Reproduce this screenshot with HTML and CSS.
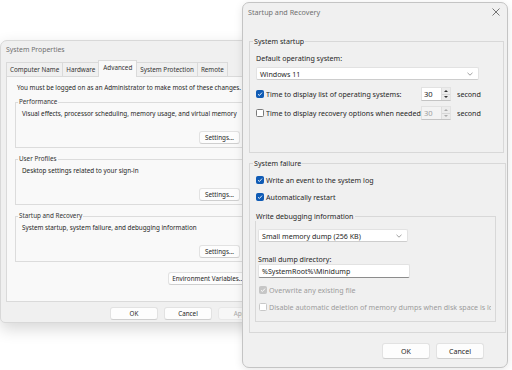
FILE: index.html
```html
<!DOCTYPE html>
<html lang="en">
<head>
  <meta charset="UTF-8">
  <meta name="viewport" content="width=device-width, initial-scale=1.0">
  <title>System Properties</title>
  <link rel="stylesheet" href="styles.css">
</head>
<body>
  <div class="desk">

    <!-- System Properties window (behind) -->
    <div class="win sysprop">
      <div class="title">System Properties</div>
      <div class="tabs">
        <span class="tab">Computer Name</span>
        <span class="tab">Hardware</span>
        <span class="tab active">Advanced</span>
        <span class="tab">System Protection</span>
        <span class="tab">Remote</span>
      </div>
      <div class="panel">
        <p class="note">You must be logged on as an Administrator to make most of these changes.</p>

        <fieldset class="grp">
          <legend>Performance</legend>
          <p>Visual effects, processor scheduling, memory usage, and virtual memory</p>
          <div class="btnrow"><button class="btn">Settings...</button></div>
        </fieldset>

        <fieldset class="grp">
          <legend>User Profiles</legend>
          <p>Desktop settings related to your sign-in</p>
          <div class="btnrow"><button class="btn">Settings...</button></div>
        </fieldset>

        <fieldset class="grp">
          <legend>Startup and Recovery</legend>
          <p>System startup, system failure, and debugging information</p>
          <div class="btnrow"><button class="btn">Settings...</button></div>
        </fieldset>

        <div class="btnrow env-row"><button class="btn env">Environment Variables...</button></div>
      </div>
      <div class="footer">
        <button class="btn">OK</button>
        <button class="btn">Cancel</button>
        <button class="btn" disabled>Apply</button>
      </div>
    </div>

    <!-- Startup and Recovery dialog (front) -->
    <div class="win sr">
      <div class="title">
        <span>Startup and Recovery</span>
        <svg class="close" width="8" height="8" viewBox="0 0 8 8"><path d="M0.5 0.5 L7.5 7.5 M7.5 0.5 L0.5 7.5" stroke="#555" stroke-width="0.8"/></svg>
      </div>
      <div class="body">
        <fieldset class="fs fs-start">
          <legend>System startup</legend>
          <div class="lbl">Default operating system:</div>
          <div class="select os">
            <span>Windows 11</span>
            <svg width="6" height="4" viewBox="0 0 6 4"><path d="M0.5 0.8 L3 3.2 L5.5 0.8" stroke="#777" stroke-width="0.7" fill="none"/></svg>
          </div>
          <div class="row first">
            <span class="cb on"><svg width="8" height="8" viewBox="0 0 8 8"><path d="M2 4.2 L3.4 5.5 L6 2.6" stroke="#fff" stroke-width="0.9" fill="none"/></svg></span>
            <span class="rowtext">Time to display list of operating systems:</span>
            <span class="num"><span class="val">30</span><span class="spin"><i class="up"></i><i class="down"></i></span></span>
            <span class="secs">seconds</span>
          </div>
          <div class="row">
            <span class="cb"></span>
            <span class="rowtext">Time to display recovery options when needed:</span>
            <span class="num off"><span class="val">30</span><span class="spin"><i class="up"></i><i class="down"></i></span></span>
            <span class="secs">seconds</span>
          </div>
        </fieldset>

        <fieldset class="fs fs-fail">
          <legend>System failure</legend>
          <div class="row first">
            <span class="cb on"><svg width="8" height="8" viewBox="0 0 8 8"><path d="M2 4.2 L3.4 5.5 L6 2.6" stroke="#fff" stroke-width="0.9" fill="none"/></svg></span>
            <span>Write an event to the system log</span>
          </div>
          <div class="row">
            <span class="cb on"><svg width="8" height="8" viewBox="0 0 8 8"><path d="M2 4.2 L3.4 5.5 L6 2.6" stroke="#fff" stroke-width="0.9" fill="none"/></svg></span>
            <span>Automatically restart</span>
          </div>

          <fieldset class="fs inner">
            <legend>Write debugging information</legend>
            <div class="select dump">
              <span>Small memory dump (256 KB)</span>
              <svg width="6" height="4" viewBox="0 0 6 4"><path d="M0.5 0.8 L3 3.2 L5.5 0.8" stroke="#777" stroke-width="0.7" fill="none"/></svg>
            </div>
            <div class="lbl dir-lbl">Small dump directory:</div>
            <div class="textbox">%SystemRoot%\Minidump</div>
            <div class="row first dis">
              <span class="cb on"><svg width="8" height="8" viewBox="0 0 8 8"><path d="M2 4.2 L3.4 5.5 L6 2.6" stroke="#fff" stroke-width="0.9" fill="none"/></svg></span>
              <span>Overwrite any existing file</span>
            </div>
            <div class="row dis">
              <span class="cb"></span>
              <span class="clip">Disable automatic deletion of memory dumps when disk space is low</span>
            </div>
          </fieldset>
        </fieldset>

        <div class="footer">
          <button class="btn">OK</button>
          <button class="btn">Cancel</button>
        </div>
      </div>
    </div>

  </div>
</body>
</html>
```

FILE: styles.css
```css
body {
  margin: 0;
  font-family: "Noto Sans", "Segoe UI", sans-serif;
  color: #262626;
}
.desk {
  position: relative;
  width: 512px;
  height: 370px;
  background: #fff;
  overflow: hidden;
}
.win {
  position: absolute;
  box-sizing: border-box;
  background: #f0f0f0;
}
p {
  margin: 0;
}
.btn {
  box-sizing: border-box;
  font-family: inherit;
  font-size: inherit;
  color: #262626;
  background: #fdfdfd;
  border: 1px solid #e2e2e2;
  border-bottom-color: #cfcfcf;
  border-radius: 3px;
  padding: 0;
  cursor: pointer;
}
.btn:disabled {
  color: #a8a8a8;
  background: #f7f7f7;
  border-color: #e8e8e8;
}

/* System Properties */
.sysprop {
  left: 0;
  top: 40px;
  width: 272px;
  height: 283px;
  border: 1px solid #d8d8d8;
  border-radius: 7px 7px 5px 5px;
  box-shadow: 0 6px 16px rgba(0, 0, 0, 0.16);
  font-size: 6.3px;
}
.sysprop .title {
  height: 17px;
  line-height: 17px;
  padding-left: 5px;
  color: #707070;
  font-size: 6.9px;
}
.tabs {
  display: flex;
  align-items: flex-end;
  height: 18px;
  padding-left: 5px;
  position: relative;
  z-index: 1;
}
.tab {
  height: 14px;
  line-height: 13px;
  padding: 0 3px;
  box-sizing: border-box;
  border: 1px solid #dadada;
  border-bottom: none;
  margin-right: -1px;
  background: #f0f0f0;
  color: #333;
}
.tab.active {
  height: 17px;
  line-height: 14px;
  background: #f9f9f9;
  margin-bottom: -1px;
  padding: 0 4px;
  position: relative;
}
.panel {
  box-sizing: border-box;
  height: 226px;
  margin: 0 5px;
  padding: 6px 8px 0;
  border: 1px solid #dadada;
  background: #f9f9f9;
}
.note {
  line-height: 10px;
  padding-left: 2px;
}
.grp {
  margin: 6px 0 0;
  padding: 0 8px 3px 6px;
  border: 1px solid #dcdcdc;
}
.grp:first-of-type {
  margin-top: 4px;
}
.grp legend {
  line-height: 10px;
  padding: 0 1px;
  margin-left: -4px;
  color: #333;
}
.grp p {
  margin-top: 2px;
  line-height: 10px;
}
.btnrow {
  display: flex;
  justify-content: flex-end;
  margin-top: 12px;
}
.grp .btn {
  width: 41px;
  height: 13px;
  margin-right: 8px;
}
.env-row {
  margin-top: 10px;
}
.env {
  width: 80px;
  height: 13px;
  margin-right: 9px;
}
.sysprop .footer {
  display: flex;
  justify-content: flex-end;
  gap: 6px;
  padding: 5px 5px 0 0;
}
.sysprop .footer .btn {
  width: 48px;
  height: 13px;
}

/* Startup and Recovery */
.sr {
  left: 242px;
  top: 2px;
  width: 266px;
  height: 366px;
  border: 1px solid #c4c4c4;
  border-radius: 7px;
  box-shadow: 0 2px 8px rgba(0, 0, 0, 0.1);
  font-size: 7.1px;
}
.sr .title {
  height: 17px;
  display: flex;
  align-items: center;
  justify-content: space-between;
  padding: 0 7px 0 5px;
  color: #707070;
  font-size: 7.2px;
}
.sr .body {
  padding: 0 3px 0 6px;
}
.fs {
  margin: 0;
  padding: 0 6px 0 6px;
  border: 1px solid #d8d8d8;
}
.fs legend {
  line-height: 10px;
  padding: 0 1px;
  margin-left: -3px;
}
.fs-start {
  margin-top: 16px;
  padding-bottom: 32px;
}
.fs-fail {
  margin-top: 5px;
  padding-bottom: 10px;
}
.lbl {
  line-height: 10px;
  margin-top: 7px;
}
.select {
  box-sizing: border-box;
  height: 13px;
  display: flex;
  align-items: center;
  justify-content: space-between;
  padding: 0 5px 0 3px;
  background: #fff;
  border: 1px solid #e2e2e2;
  border-bottom-color: #cdcdcd;
  border-radius: 2px;
}
.select.os {
  width: 223px;
  margin-top: 4px;
}
.select.dump {
  width: 150px;
  margin-top: 8px;
}
.row {
  display: flex;
  align-items: center;
  height: 10px;
  margin-top: 7px;
  white-space: nowrap;
}
.fs-start .row {
  height: 14px;
  margin-top: 5px;
}
.fs-start .row.first {
  margin-top: 7px;
}
.cb {
  box-sizing: border-box;
  width: 8px;
  height: 8px;
  margin-right: 2px;
  border: 1px solid #7a7a7a;
  border-radius: 1.5px;
  background: #fff;
  flex: none;
  display: flex;
}
.cb svg {
  margin: -1px;
}
.cb.on {
  background: #0f5bb5;
  border-color: #0f5bb5;
}
.rowtext {
  width: 155px;
  overflow: hidden;
}
.num {
  display: flex;
  height: 14px;
  box-sizing: border-box;
  border: 1px solid #e2e2e2;
  border-bottom-color: #c4c4c4;
  background: #fff;
  flex: none;
}
.num .val {
  box-sizing: border-box;
  width: 19px;
  padding-left: 2px;
  line-height: 12px;
  font-size: 7.6px;
}
.num.off {
  background: #f3f3f3;
  color: #a0a0a0;
}
.spin {
  width: 8px;
  display: flex;
  flex-direction: column;
  border-left: 1px solid #dedede;
  background: #ececec;
}
.spin i {
  flex: 1;
  display: flex;
  align-items: center;
  justify-content: center;
}
.spin i::after {
  content: "";
  border-left: 2px solid transparent;
  border-right: 2px solid transparent;
}
.spin .up {
  border-bottom: 1px solid #d6d6d6;
}
.spin .up::after {
  border-bottom: 2px solid #333;
}
.spin .down::after {
  border-top: 2px solid #333;
}
.num.off .spin i::after {
  border-top-color: #aaa;
  border-bottom-color: #aaa;
}
.secs {
  width: 24px;
  overflow: hidden;
  margin-left: 6px;
}
.inner {
  margin: 9px 3px 0 -1px;
  padding: 0 4px 9px 2px;
}
.dir-lbl {
  margin-top: 12px;
}
.textbox {
  box-sizing: border-box;
  width: 152px;
  height: 14px;
  line-height: 12px;
  padding-left: 3px;
  background: #fff;
  border: 1px solid #e2e2e2;
  border-bottom-color: #8c8c8c;
  border-radius: 2px;
}
.inner .row {
  padding-left: 1px;
}
.dis {
  color: #9c9c9c;
}
.dis .cb {
  border-color: #c8c8c8;
}
.dis .cb.on {
  background: #c6c6c6;
  border-color: #c6c6c6;
}
.clip {
  width: 222px;
  overflow: hidden;
}
.sr .footer {
  display: flex;
  justify-content: flex-end;
  gap: 6px;
  margin-top: 10px;
  padding-right: 20px;
}
.sr .footer .btn {
  width: 48px;
  height: 16px;
}
```
